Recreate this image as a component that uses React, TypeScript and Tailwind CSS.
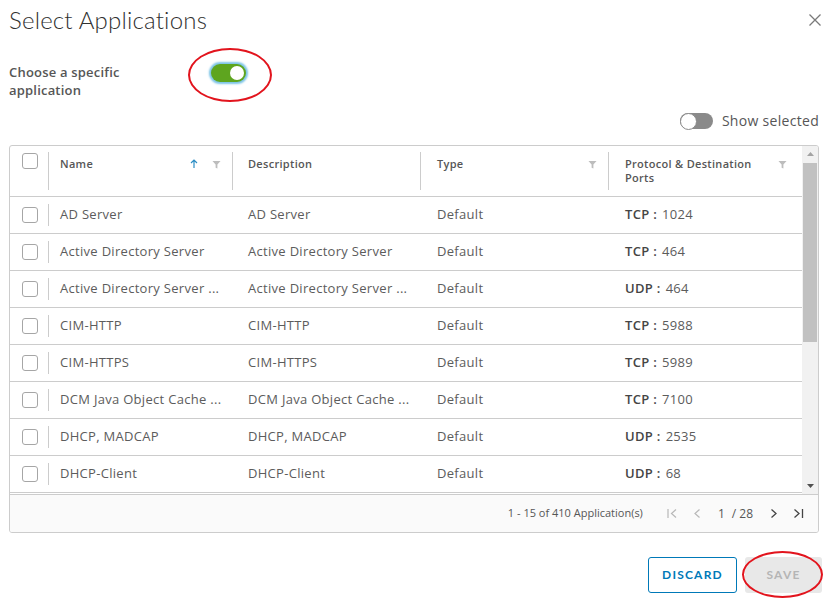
import React from 'react';

type Row = { name: string; desc: string; proto: string; port: string };

const rows: Row[] = [
  { name: 'AD Server', desc: 'AD Server', proto: 'TCP', port: '1024' },
  { name: 'Active Directory Server', desc: 'Active Directory Server', proto: 'TCP', port: '464' },
  { name: 'Active Directory Server ...', desc: 'Active Directory Server ...', proto: 'UDP', port: '464' },
  { name: 'CIM-HTTP', desc: 'CIM-HTTP', proto: 'TCP', port: '5988' },
  { name: 'CIM-HTTPS', desc: 'CIM-HTTPS', proto: 'TCP', port: '5989' },
  { name: 'DCM Java Object Cache ...', desc: 'DCM Java Object Cache ...', proto: 'TCP', port: '7100' },
  { name: 'DHCP, MADCAP', desc: 'DHCP, MADCAP', proto: 'UDP', port: '2535' },
  { name: 'DHCP-Client', desc: 'DHCP-Client', proto: 'UDP', port: '68' },
];

const Filter = () => (
  <svg width="9" height="9" viewBox="0 0 10 10" className="shrink-0 mt-[3px]">
    <path d="M0.5 1 H9.5 L6 5 V9.5 L4 8.5 V5 Z" fill="#bdbdbd" />
  </svg>
);

const Checkbox = () => (
  <div className="w-4 h-4 rounded-[3px] border border-[#a6a6a6] bg-white shrink-0" />
);

const App: React.FC = () => {
  return (
    <div className="relative w-[833px] h-[602px] overflow-hidden bg-white text-[#565656] font-['Open_Sans',sans-serif]">
      {/* title */}
      <div className="flex items-start justify-between pl-[9px] pr-[12px] pt-[6px]">
        <h1 className="font-['Lato',sans-serif] text-[24px] leading-[28px] font-light text-[#313131] tracking-[0.2px]">
          Select Applications
        </h1>
        <svg width="12" height="12" viewBox="0 0 12 12" className="mt-[8px]">
          <path d="M0.5 0.5 L11.5 11.5 M11.5 0.5 L0.5 11.5" stroke="#7a7a7a" strokeWidth="1.3" />
        </svg>
      </div>

      {/* choose toggle */}
      <div className="flex mt-[29px] pl-[9px]">
        <div className="w-[202px] text-[13px] leading-[18px] font-semibold tracking-[0.2px] text-[#565656]">
          Choose a specific
          <br />
          application
        </div>
        <div className="mt-[1px] w-[35px] h-[18px] rounded-full bg-[#5ea51f] shadow-[0_0_2px_2px_#7cc4e6] flex items-center justify-end pr-[2px]">
          <div className="w-[14px] h-[14px] rounded-full bg-white" />
        </div>
      </div>

      {/* show selected */}
      <div className="flex items-center justify-end gap-[9px] mt-[13px] pr-[14px] h-[18px]">
        <div className="w-[33px] h-[16px] rounded-full bg-[#8a8a8a] flex items-center">
          <div className="w-[17px] h-[17px] rounded-full bg-white border border-[#8a8a8a]" />
        </div>
        <span className="text-[14px] leading-[18px] tracking-[0.3px] text-[#565656]">Show selected</span>
      </div>

      {/* table */}
      <div className="ml-[9px] mt-[15px] w-[810px] h-[388px] border border-[#cccccc] rounded-[3px] flex flex-col overflow-hidden">
        <div className="flex h-[348px]">
          <div className="w-[792px] flex flex-col">
            {/* header */}
            <div className="flex h-[51px] border-b border-[#cccccc] shrink-0 text-[11px] leading-[14px] font-semibold tracking-[0.3px] text-[#565656]">
              <div className="w-[38px] pl-[12px] pt-[7px]">
                <Checkbox />
              </div>
              <div className="w-[184px] flex items-start">
                <div className="w-px h-[38px] mt-[6px] bg-[#cccccc]" />
                <div className="flex-1 flex justify-between pt-[11px] pl-[11px] pr-[11px]">
                  <span>Name</span>
                  <div className="flex items-start gap-[14px]">
                    <svg width="8" height="9" viewBox="0 0 8 9" className="mt-[2px]">
                      <path d="M4 1 V9 M1 4 L4 1 L7 4" stroke="#2d8ec4" strokeWidth="1.2" fill="none" />
                    </svg>
                    <Filter />
                  </div>
                </div>
              </div>
              <div className="w-[188px] flex items-start">
                <div className="w-px h-[38px] mt-[6px] bg-[#cccccc]" />
                <div className="flex-1 pt-[11px] pl-[15px]">Description</div>
              </div>
              <div className="w-[188px] flex items-start">
                <div className="w-px h-[38px] mt-[6px] bg-[#cccccc]" />
                <div className="flex-1 flex justify-between pt-[11px] pl-[16px] pr-[11px]">
                  <span>Type</span>
                  <Filter />
                </div>
              </div>
              <div className="w-[194px] flex items-start">
                <div className="w-px h-[38px] mt-[6px] bg-[#cccccc]" />
                <div className="flex-1 flex justify-between pt-[11px] pl-[16px] pr-[15px]">
                  <span>
                    Protocol &amp; Destination
                    <br />
                    Ports
                  </span>
                  <Filter />
                </div>
              </div>
            </div>

            {/* rows */}
            {rows.map((r, i) => (
              <div key={i} className="flex items-center h-[37px] border-b border-[#cccccc] shrink-0 text-[13px] tracking-[0.3px] text-[#5c5c5c]">
                <div className="w-[38px] pl-[12px]">
                  <Checkbox />
                </div>
                <div className="w-[184px] flex items-center">
                  <div className="w-px h-[22px] bg-[#cccccc]" />
                  <span className="pl-[11px] whitespace-nowrap">{r.name}</span>
                </div>
                <div className="w-[188px] pl-[16px] whitespace-nowrap">{r.desc}</div>
                <div className="w-[188px] pl-[17px]">Default</div>
                <div className="w-[194px] pl-[17px]">
                  <span className="font-semibold text-[#454545]">{r.proto} :</span>
                  <span className="ml-[5px]">{r.port}</span>
                </div>
              </div>
            ))}
          </div>

          {/* scrollbar */}
          <div className="w-[16px] bg-[#f1f1f1] flex flex-col items-center">
            <div className="h-[16px] flex items-center justify-center">
              <svg width="7" height="4" viewBox="0 0 7 4">
                <path d="M0 4 L3.5 0 L7 4 Z" fill="#a3a3a3" />
              </svg>
            </div>
            <div className="w-[14px] h-[179px] mt-[1px] bg-[#c1c1c1]" />
            <div className="flex-1" />
            <div className="h-[16px] flex items-center justify-center">
              <svg width="7" height="4" viewBox="0 0 7 4">
                <path d="M0 0 L7 0 L3.5 4 Z" fill="#505050" />
              </svg>
            </div>
          </div>
        </div>

        {/* footer */}
        <div className="flex-1 border-t border-[#cccccc] bg-[#fafafa] flex items-center justify-end pr-[14px] text-[11px] text-[#565656]">
          <span>1 - 15 of 410 Application(s)</span>
          <svg width="11" height="11" viewBox="0 0 11 11" className="ml-[24px]">
            <path d="M1 1 V10 M9 1.5 L4.5 5.5 L9 9.5" stroke="#b8b8b8" strokeWidth="1.2" fill="none" />
          </svg>
          <svg width="8" height="11" viewBox="0 0 8 11" className="ml-[15px]">
            <path d="M6.5 1.5 L2 5.5 L6.5 9.5" stroke="#b8b8b8" strokeWidth="1.2" fill="none" />
          </svg>
          <span className="ml-[17px] text-[12px]">1</span>
          <span className="ml-[7px] text-[12px]">/ 28</span>
          <svg width="8" height="11" viewBox="0 0 8 11" className="ml-[17px]">
            <path d="M1.5 1.5 L6 5.5 L1.5 9.5" stroke="#444444" strokeWidth="1.3" fill="none" />
          </svg>
          <svg width="11" height="11" viewBox="0 0 11 11" className="ml-[15px]">
            <path d="M1.5 1.5 L6 5.5 L1.5 9.5 M9.5 1 V10" stroke="#444444" strokeWidth="1.3" fill="none" />
          </svg>
        </div>
      </div>

      {/* buttons */}
      <div className="flex justify-end gap-[8px] mt-[24px] pr-[11px] font-['Lato',sans-serif]">
        <button className="w-[89px] h-[36px] border border-[#0079b8] rounded-[3px] text-[12px] font-bold tracking-[1.2px] text-[#0079b8] bg-white">
          DISCARD
        </button>
        <button className="w-[77px] h-[36px] rounded-[3px] text-[12px] font-bold tracking-[1.2px] text-[#b5b5b5] bg-[#e8e8e8]">
          SAVE
        </button>
      </div>

      {/* annotation marks */}
      <div className="absolute left-[188px] top-[48px] w-[84px] h-[54px] rounded-[50%] border-2 border-[#e2141d]" />
      <div className="absolute left-[742px] top-[551px] w-[81px] h-[47px] rounded-[50%] border-2 border-[#e2141d]" />
    </div>
  );
};

export default App;
